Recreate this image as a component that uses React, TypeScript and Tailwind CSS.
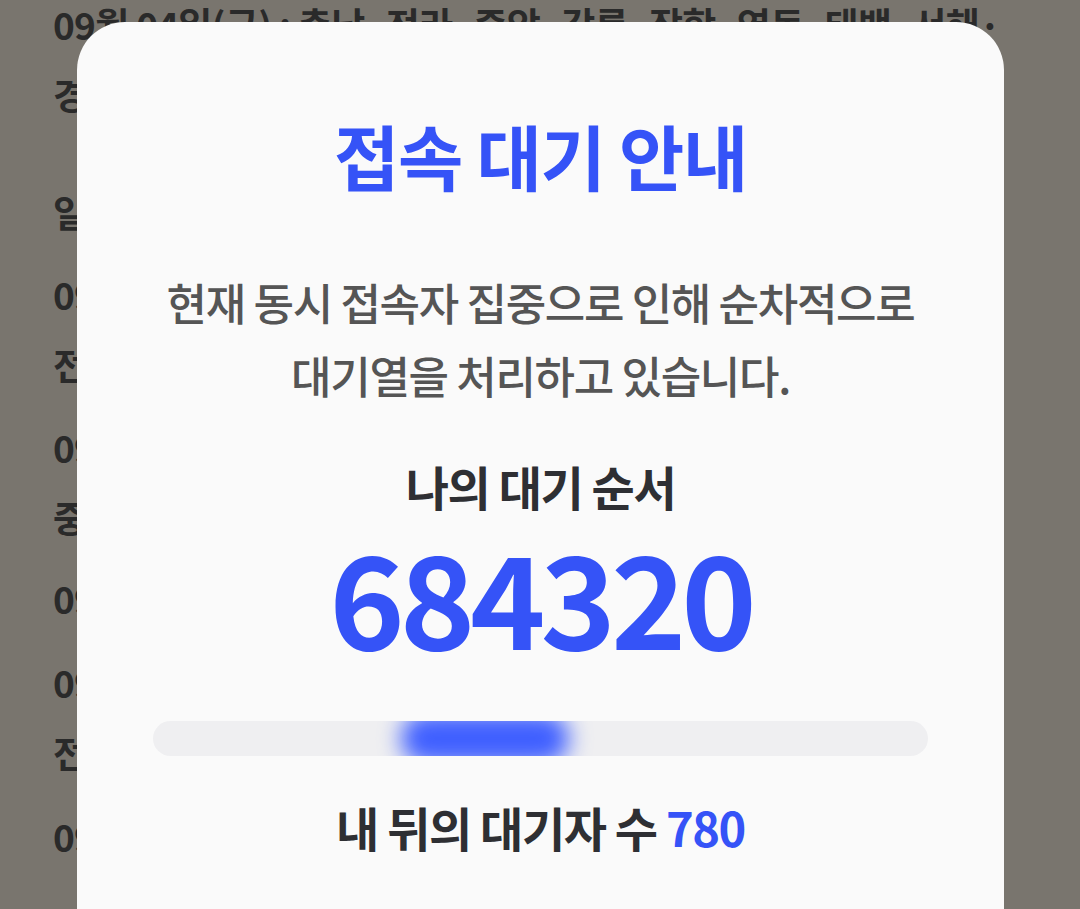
import React from 'react';

const bgParagraphs: { text: string[]; gap: string }[] = [
  { text: ['09월 04일(금) : 충남·전라·중앙·강릉·장항·영동·태백·서해·', '경전·동해선 일부 열차 운행 조정'], gap: 'mt-[-11px]' },
  { text: ['일반열차 운행 조정 안내'], gap: 'mt-[48px]' },
  { text: ['09월 05일(토) : 경부·호남선 일부 구간 서행 운행', '전라선 일부 열차 운행 중지'], gap: 'mt-[12px]' },
  { text: ['09월 06일(일) : 경부·경전선 일부 열차 운행 조정', '중앙선 일부 구간 버스 연계 수송'], gap: 'mt-[13px]' },
  { text: ['09월 07일(월) : 전 노선 정상 운행 예정'], gap: 'mt-[11px]' },
  { text: ['09월 08일(화) : 동해·영동선 일부 열차 지연', '전라·장항선 일부 열차 운행 조정'], gap: 'mt-[14px]' },
  { text: ['09월 09일(수) : 전 노선 정상 운행'], gap: 'mt-[14px]' },
];

const QueueModal: React.FC<{ position: string; behind: string }> = ({ position, behind }) => (
  <div className="absolute left-[77px] top-[22px] w-[927px] h-[920px] rounded-t-[48px] bg-[#fafafa] flex flex-col items-center px-[76px] pt-[92px]">
    <h1 className="text-[71px] leading-[80px] font-bold tracking-[-0.02em] text-[#3553f7]">접속 대기 안내</h1>

    <p className="mt-[72px] text-[44px] leading-[73px] font-medium tracking-[-0.03em] text-[#555555] text-center">
      현재 동시 접속자 집중으로 인해 순차적으로
      <br />
      대기열을 처리하고 있습니다.
    </p>

    <div className="mt-[48px] text-[47px] leading-[52px] font-bold tracking-[-0.03em] text-[#2e2f33]">나의 대기 순서</div>

    <div className="mt-[18px] text-[128px] leading-[130px] font-bold tracking-[-0.04em] text-[#3553f7]">{position}</div>

    {/* 진행 표시줄 — 흐릿한 파란 막대 */}
    <div className="relative mt-[61px] w-full h-[35px] rounded-full bg-[#efeff1] overflow-hidden">
      <div className="absolute left-[248px] top-[-8px] w-[168px] h-[51px] rounded-full bg-[#3f5fff] blur-[11px]" />
    </div>

    <div className="mt-[45px] text-[47px] leading-[52px] font-bold tracking-[-0.03em] text-[#2e2f33]">
      내 뒤의 대기자 수 <span className="text-[#3553f7]">{behind}</span>
    </div>
  </div>
);

export default function App() {
  return (
    <div className="relative h-[909px] w-[1080px] overflow-hidden bg-[#79756e] font-['Noto_Sans_CJK_KR','Noto_Sans',sans-serif]">
      {/* 뒤 페이지 (어둡게 가려진 안내문) */}
      <div className="pl-[53px] text-[37px] leading-[70px] font-bold tracking-[-0.02em] text-[#2a2a2a] whitespace-nowrap">
        {bgParagraphs.map((p, i) => (
          <div key={i} className={p.gap}>
            {p.text.map((line, j) => (
              <div key={j}>{line}</div>
            ))}
          </div>
        ))}
      </div>

      <QueueModal position="684320" behind="780" />
    </div>
  );
}
